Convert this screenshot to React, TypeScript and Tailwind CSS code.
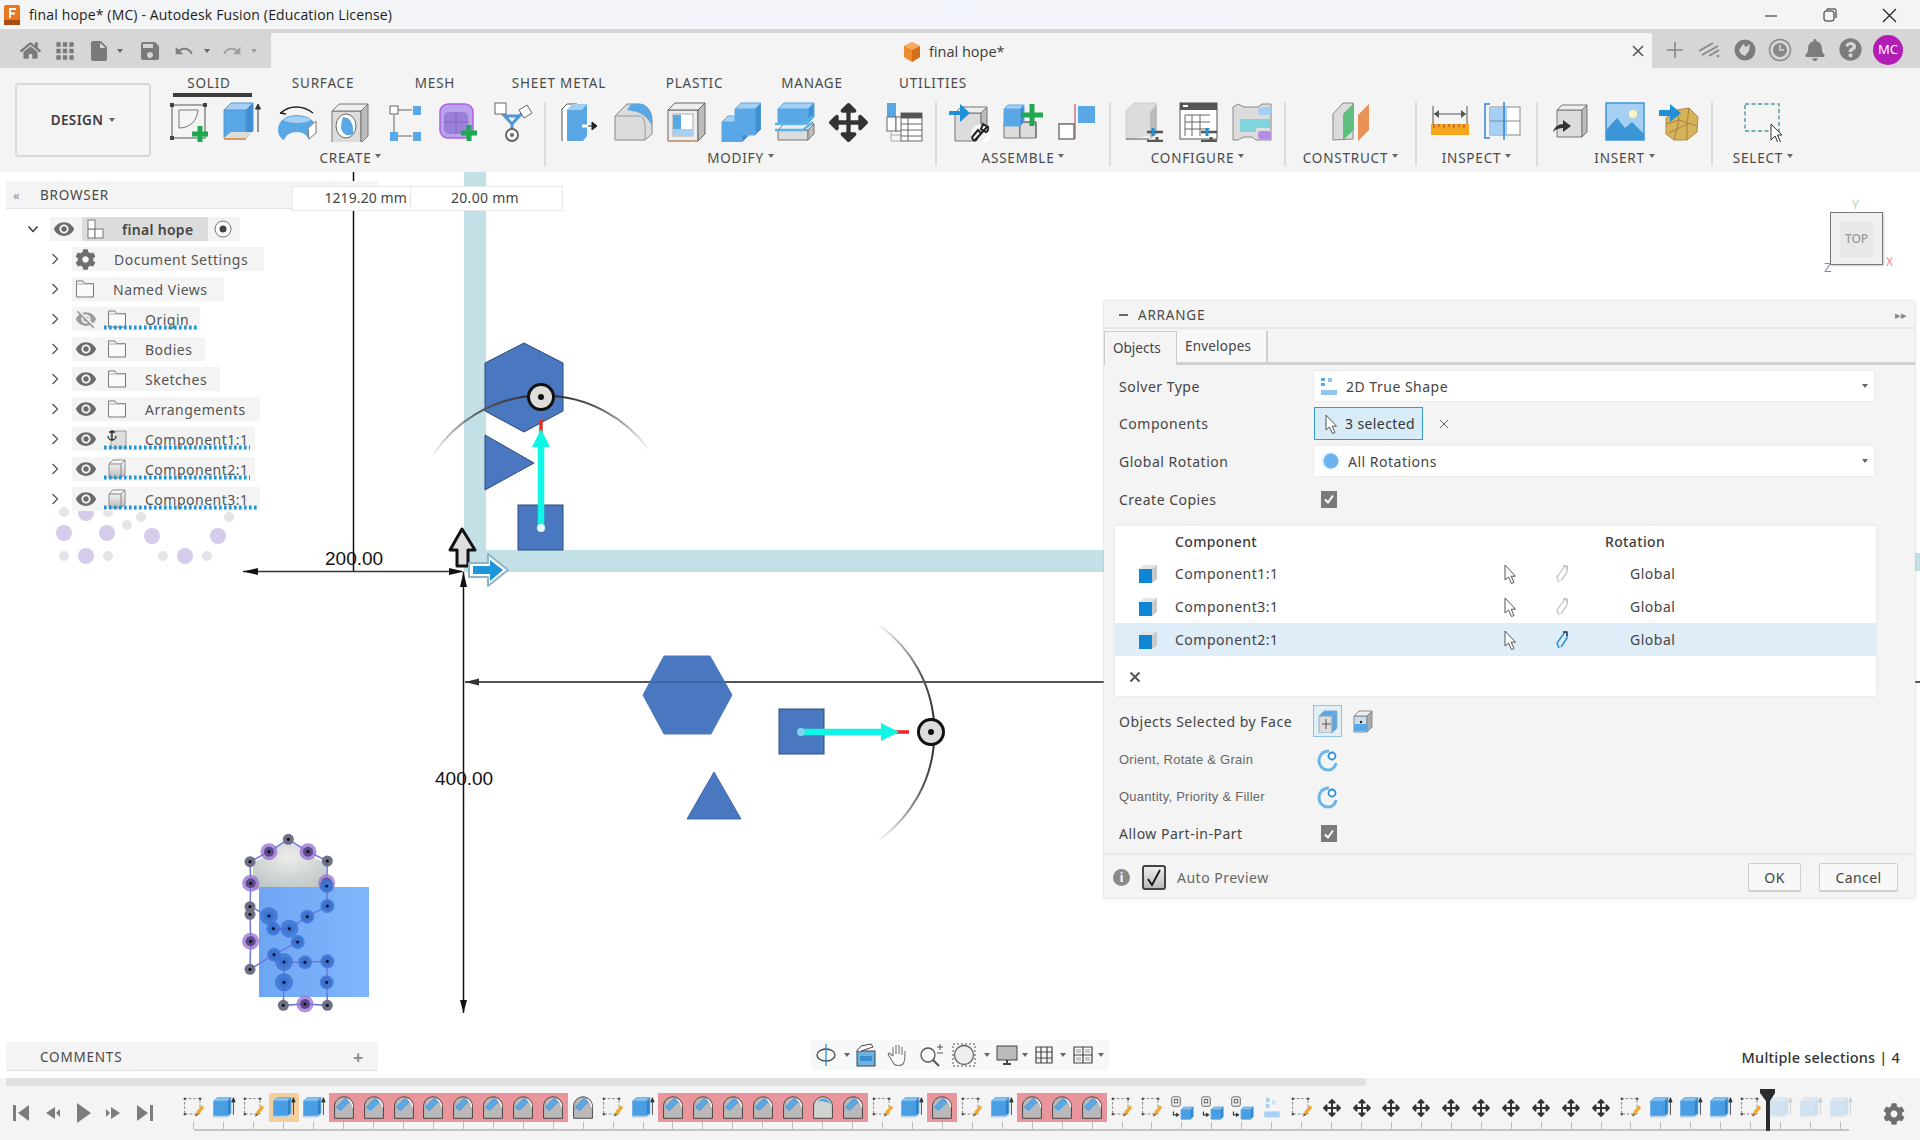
import React from "react";
import { FaArrowsAlt, FaBell, FaCog, FaHome, FaQuestionCircle } from "react-icons/fa";
import { MdApps, MdInsertDriveFile, MdRedo, MdSave, MdUndo, MdVisibility, MdVisibilityOff } from "react-icons/md";

const B = "#5aa7e6";
const BL = "#a6d0f3";
const G = "#dcdcdc";
const GD = "#bcbcbc";
const OL = "#777";

function Box({ x, y, w, h, d, f = G, t = "#eee", s = GD, st = OL }: { x: number; y: number; w: number; h: number; d: number; f?: string; t?: string; s?: string; st?: string }) {
  return (
    <g stroke={st} strokeWidth="1" strokeLinejoin="round">
      <rect x={x} y={y + d} width={w} height={h} fill={f} />
      <polygon points={`${x},${y + d} ${x + d},${y} ${x + w + d},${y} ${x + w},${y + d}`} fill={t} />
      <polygon points={`${x + w},${y + d} ${x + w + d},${y} ${x + w + d},${y + h} ${x + w},${y + d + h}`} fill={s} />
    </g>
  );
}
const Plus = ({ x, y, s = 8 }: { x: number; y: number; s?: number }) => (
  <path d={`M${x} ${y - s}V${y + s}M${x - s} ${y}H${x + s}`} stroke="#1fa84f" strokeWidth="5" fill="none" />
);
const Sv = ({ children, s = 40, v = 40, cls = "" }: { children: React.ReactNode; s?: number; v?: number; cls?: string }) => (
  <svg width={s} height={s} viewBox={`0 0 ${v} ${v}`} className={"shrink-0 " + cls}>{children}</svg>
);
const Sliders = ({ x, y }: { x: number; y: number }) => (
  <g>
    <path d={`M${x} ${y}h16M${x} ${y + 9}h16`} stroke="#555" strokeWidth="2.5" />
    <path d={`M${x + 6} ${y - 4}v8`} stroke="#1e8fd8" strokeWidth="3" />
    <path d={`M${x + 10} ${y + 5}v8`} stroke="#555" strokeWidth="3" />
  </g>
);

const ribbonIcons: Record<string, React.ReactNode> = {
  sketch: (
    <>
      <rect x="3" y="3" width="33" height="33" fill="none" stroke="#555" />
      {[[1, 1], [34, 1], [1, 34]].map(([a, b]) => <rect key={a + "-" + b} x={a} y={b} width="4" height="4" fill="#444" />)}
      <path d="M10 8V26M10 26C22 26 28 18 29 8M10 8H29" fill="none" stroke="#777" />
      <Plus x={31} y={32} />
    </>
  ),
  extrude: (
    <>
      <Box x={1} y={1} w={22} h={28} d={7} f={B} t={BL} s="#3f8ed4" st="#4f97d6" />
      <polygon points="1,36 8,30 30,30 23,36" fill="#ddd" />
      <path d="M1 37h22" stroke="#e29a5a" strokeWidth="2" />
      <path d="M35 30V3M32.5 7L35 2L37.5 7Z" stroke="#333" fill="#333" />
    </>
  ),
  revolve: (
    <>
      <path d="M1 28C1 18 10 13 20 13C30 13 39 18 39 28L32 38C30 33 26 30 20 30C13 30 9 33 7 38C3 36 1 32 1 28Z" fill={B} />
      <path d="M6 18C12 13 28 13 34 18C28 22 12 22 6 18Z" fill={BL} />
      <polygon points="31,26 39,19 39,31 32,37" fill="#fff" stroke="#777" />
      <path d="M4 11C12 3 26 3 36 11M3 11l5-3M3 11l6 1" fill="none" stroke="#222" strokeWidth="1.4" />
    </>
  ),
  hole: (
    <>
      <Box x={1} y={2} w={29} h={32} d={7} />
      <ellipse cx="15" cy="24" rx="10" ry="12" fill="#fff" stroke="#666" />
      <path d="M12 15C20 15 23 24 22 32C17 35 12 33 10 26C10 22 11 18 12 15Z" fill={B} />
    </>
  ),
  pattern: (
    <>
      <path d="M13 8H27M9 13V30M13 34H27" stroke="#666" />
      <rect x="5" y="4" width="8" height="8" fill="#fff" stroke="#666" />
      <rect x="28" y="4" width="8" height="9" fill={B} />
      <rect x="5" y="30" width="8" height="9" fill={B} />
      <rect x="28" y="30" width="8" height="9" fill={B} />
    </>
  ),
  form: (
    <>
      <rect x="1" y="2" width="33" height="34" rx="8" fill="#b9a3ea" stroke="#b260e0" strokeWidth="1.5" />
      <rect x="5" y="10" width="24" height="22" rx="5" fill="#9a80d8" />
      <path d="M5 20H30M17 10V32" stroke="#7f66c4" />
      <Plus x={30} y={31} />
    </>
  ),
  sym: (
    <>
      <path d="M8 10L19 22L30 10M19 22V30M11 14L27 14" fill="none" stroke="#4f97d6" strokeWidth="3" />
      <rect x="2" y="1" width="11" height="11" fill="#fff" stroke="#666" />
      <polygon points="26,8 34,3 39,11 31,16" fill="#fff" stroke="#666" />
      <circle cx="19" cy="33" r="6" fill="#fff" stroke="#666" strokeWidth="2" />
      <circle cx="19" cy="33" r="2" fill="#666" />
    </>
  ),
  press: (
    <>
      <path d="M3 39V7L8 2H18V39" fill="#fff" stroke="#555" />
      <path d="M8 39V8L14 2H28V34L24 39Z" fill={B} />
      <path d="M8 8L14 2H28L23 8Z" fill={BL} />
      <path d="M23 24H38" stroke="#fff" strokeWidth="3" />
      <path d="M29 24H36M33 20L38 24L33 28Z" stroke="#222" fill="#222" />
    </>
  ),
  fillet: (
    <>
      <path d="M2 38V14L14 2H26C34 2 39 10 39 18V32L32 38Z" fill={G} stroke="#888" />
      <path d="M2 14H26C31 14 33 20 32 38" fill="none" stroke="#999" />
      <path d="M18 2H27C34 2 39 10 39 17V24C36 18 31 12 24 10L14 8Z" fill={B} />
    </>
  ),
  shell: (
    <>
      <Box x={1} y={1} w={30} h={31} d={7} st="#666" f="#eee" />
      <rect x="6" y="12" width="20" height="22" fill="#fff" stroke="#aaa" />
      <path d="M6 34V13H14V27H26V34Z" fill={BL} />
      <path d="M6 13H14V27H6Z" fill={B} />
      <path d="M1 39H31" stroke="#e29a5a" />
    </>
  ),
  combine: (
    <>
      <Box x={1} y={14} w={20} h={20} d={6} f={B} t={BL} s="#3f8ed4" st="#5aa7e6" />
      <Box x={14} y={1} w={20} h={26} d={6} f={B} t={BL} s="#3f8ed4" st="#5aa7e6" />
    </>
  ),
  split: (
    <>
      <Box x={3} y={1} w={30} h={14} d={6} f={B} t={BL} s="#3f8ed4" st="#5aa7e6" />
      <Box x={3} y={22} w={30} h={10} d={6} />
      <path d="M0 28H28L38 20M0 22H28L38 14" stroke="#5ab4ec" strokeWidth="2.4" fill="none" />
    </>
  ),
  table: (
    <>
      <rect x="4" y="1" width="9" height="14" fill={B} />
      <rect x="4" y="15" width="9" height="14" fill="#fff" stroke="#666" />
      <rect x="13" y="15" width="9" height="14" fill="#fff" stroke="#666" />
      <path d="M8 29V39H18M8 33H18" stroke="#aaa" fill="none" />
      <rect x="18" y="11" width="21" height="28" fill="#fff" stroke="#666" />
      <path d="M18 16H39M18 22H39M18 28H39M18 34H39M25 16V39" stroke="#666" />
      <rect x="18" y="11" width="21" height="5" fill="#555" />
    </>
  ),
  insertc: (
    <>
      <Box x={6} y={5} w={26} h={28} d={6} />
      <path d="M0 9H11V2L21 11L11 20V13H0Z" fill="#1e8fd8" />
      <circle cx="32" cy="32" r="10" fill="#fff" opacity=".8" />
      <path d="M26 38L38 25M24 34l5-6 3 3-5 7c-2 2-5-2-3-4ZM34 22l5 3c1 2 0 4-2 5l-5-3Z" stroke="#222" strokeWidth="2" fill="none" />
    </>
  ),
  newcomp: (
    <>
      <Box x={1} y={20} w={16} h={16} d={0} />
      <Box x={17} y={20} w={16} h={16} d={0} />
      <Box x={1} y={3} w={16} h={17} d={4} f={B} t={BL} s="#3f8ed4" st="#5aa7e6" />
      <Plus x={29} y={13} s={11} />
    </>
  ),
  joint: (
    <>
      <rect x="21" y="4" width="17" height="17" fill={B} />
      <path d="M18 2V37" stroke="#c0354a" />
      <path d="M1 22H18" stroke="#777" />
      <rect x="2" y="22" width="15" height="15" fill="#fff" stroke="#777" strokeWidth="1.5" />
    </>
  ),
  cfg1: (
    <>
      <path d="M2 38V9L10 1H32V32" fill={G} stroke="#ccc" />
      <path d="M26 10L33 2V32L26 37Z" fill={GD} />
      <path d="M2 37H25" stroke="#555" />
      <Sliders x={23} y={30} />
    </>
  ),
  cfg2: (
    <>
      <rect x="2" y="1" width="37" height="36" fill="#fff" stroke="#555" />
      <rect x="2" y="1" width="37" height="7" fill="#555" />
      <rect x="5" y="3" width="5" height="2" fill="#fff" />
      <path d="M7 13H32M7 20H32M7 27H32M14 13V34M22 13V34M7 13V34" stroke="#666" />
      <Sliders x={23} y={30} />
    </>
  ),
  cfg3: (
    <>
      <path d="M1 5L6 2L12 5H26L30 2H39V38H24L20 35H12L6 38H1Z" fill={G} stroke="#888" />
      <rect x="26" y="5" width="13" height="8" rx="3" fill={BL} />
      <path d="M8 17H38V26H24V30H8Z" fill="#7fd4de" />
      <rect x="26" y="29" width="13" height="8" rx="3" fill="#b58be8" />
    </>
  ),
  construct: (
    <>
      <path d="M2 38V12L12 1H22V37Z" fill={G} stroke="#888" />
      <polygon points="12,12 23,1 23,28 12,38" fill="#5fbf7f" />
      <polygon points="27,13 38,2 38,28 27,39" fill="#e89255" />
    </>
  ),
  measure: (
    <>
      <path d="M3 4V22M37 4V22M4 12H36" stroke="#555" fill="none" />
      <path d="M9 8L4 12L9 16ZM31 8L36 12L31 16Z" fill="#555" />
      <rect x="1" y="22" width="38" height="11" fill="#f5a61c" />
      <path d="M4 22v4M9 22v3M14 22v4M19 22v3M24 22v4M29 22v3M34 22v4" stroke="#945" />
    </>
  ),
  section: (
    <>
      <rect x="6" y="5" width="30" height="28" fill="#fff" stroke="#888" />
      <rect x="6" y="5" width="17" height="28" fill={BL} />
      <path d="M6 19H36" stroke="#888" />
      <path d="M6 2H1V36H6M20 0V38" stroke="#2e86d6" strokeWidth="1.5" fill="none" />
    </>
  ),
  ins1: (
    <>
      <Box x={6} y={3} w={25} h={27} d={5} />
      <path d="M2 30C3 25 8 22 12 22V18L20 24L12 30V26C8 26 5 27 2 30Z" fill="#333" />
    </>
  ),
  ins2: (
    <>
      <rect x="1" y="1" width="38" height="37" fill={BL} />
      <rect x="1" y="1" width="38" height="37" fill="none" stroke="#3c95d6" strokeWidth="1.5" />
      <circle cx="28" cy="12" r="4" fill="#fff4bd" />
      <path d="M1 38V28L12 16L20 26L27 20L39 32V38Z" fill="#3c95d6" />
    </>
  ),
  ins3: (
    <>
      <path d="M7 16L18 8L30 6L39 15L38 30L28 38H15L7 32Z" fill="#d6b25a" stroke="#ad8b3c" />
      <path d="M7 22L20 18L38 24M18 8L20 18L15 38M30 6L28 22L28 38M10 31L28 22" stroke="#a38338" fill="none" />
      <path d="M0 8H11V2L22 11L11 20V14H0Z" fill="#1e8fd8" />
    </>
  ),
  select: (
    <>
      <rect x="2" y="2" width="34" height="27" fill="none" stroke="#4a9a9a" strokeWidth="1.4" strokeDasharray="4 2.5" />
      <path d="M28 22L28 38L32 34L35 41L37.5 40L34.5 33L39 33Z" fill="#fff" stroke="#333" />
    </>
  ),
};

const tabs = [
  ["SOLID", "w-[72px]"],
  ["SURFACE", "w-[156px]"],
  ["MESH", "w-[68px]"],
  ["SHEET METAL", "w-[180px]"],
  ["PLASTIC", "w-[91px]"],
  ["MANAGE", "w-[144px]"],
  ["UTILITIES", "w-[98px]"],
];

const groups = [
  { label: "CREATE", cls: "w-[381px] pr-[8px] border-r-2", icons: ["sketch", "extrude", "revolve", "hole", "pattern", "form", "sym"] },
  { label: "MODIFY", cls: "w-[391px] border-r-2", icons: ["press", "fillet", "shell", "combine", "split", "move", "table"] },
  { label: "ASSEMBLE", cls: "w-[174px] border-r-2", icons: ["insertc", "newcomp", "joint"] },
  { label: "CONFIGURE", cls: "w-[175px] border-r-2", icons: ["cfg1", "cfg2", "cfg3"] },
  { label: "CONSTRUCT", cls: "w-[131px] border-r-2", icons: ["construct"] },
  { label: "INSPECT", cls: "w-[121px] border-r-2", icons: ["measure", "section"] },
  { label: "INSERT", cls: "w-[175px] border-r-2", icons: ["ins1", "ins2", "ins3"] },
  { label: "SELECT", cls: "w-[100px]", icons: ["select"] },
];

const Tri = ({ cls = "" }: { cls?: string }) => (
  <span className={"inline-block w-0 h-0 border-l-[3px] border-r-[3px] border-t-[4px] border-l-transparent border-r-transparent border-t-[#666] " + cls} />
);

function FusionLogo() {
  return (
    <svg width="18" height="22" viewBox="0 0 18 22" className="shrink-0">
      <rect x="1" y="1" width="16" height="20" rx="2" fill="#e8781e" />
      <rect x="1" y="16" width="16" height="5" fill="#a84a12" />
      <path d="M6 4H13V6H8V8.5H12V10.500H8V14H6Z" fill="#fff" />
    </svg>
  );
}

function TitleBar() {
  return (
    <div className="h-[29px] shrink-0 flex items-center bg-gradient-to-r from-[#f4f4f4] via-[#f2f4fb] to-[#f4f4f4] text-[14px] text-[#1c1c1c] [font-family:'Open_Sans',sans-serif]">
      <div className="ml-[3px] mr-[8px]"><FusionLogo /></div>
      <span className="tracking-[0.15px]">final hope* (MC) - Autodesk Fusion (Education License)</span>
      <div className="ml-auto flex items-center">
        <svg width="58" height="20" viewBox="0 0 58 20"><path d="M23 11H35" stroke="#222" /></svg>
        <svg width="58" height="20" viewBox="0 0 58 20"><rect x="24" y="6" width="10" height="10" rx="2" fill="none" stroke="#222" /><path d="M27 5V4H35Q36 4 36 5V13" fill="none" stroke="#222" /></svg>
        <svg width="62" height="20" viewBox="0 0 62 20"><path d="M25 4L38 17M38 4L25 17" stroke="#222" strokeWidth="1.2" /></svg>
      </div>
    </div>
  );
}

function TopStrip() {
  return (
    <div className="h-[39px] shrink-0 flex bg-[#d6d6d6] text-[#6f6f6f]">
      <div className="w-[271px] shrink-0 flex items-center pl-[20px] pt-[4px]">
        <FaHome size={21} className="text-[#7a7a7a]" />
        <MdApps size={26} className="ml-[11px] text-[#7a7a7a]" />
        <MdInsertDriveFile size={24} className="ml-[9px] text-[#7a7a7a]" />
        <Tri cls="ml-[6px]" />
        <MdSave size={24} className="ml-[15px] text-[#7a7a7a]" />
        <MdUndo size={20} className="ml-[12px] text-[#808080]" />
        <Tri cls="ml-[10px]" />
        <MdRedo size={20} className="ml-[12px] text-[#a0a0a0]" />
        <Tri cls="ml-[9px] opacity-50" />
      </div>
      <div className="flex-1 mt-[4px] bg-[#f4f4f4] rounded-t-[3px] flex items-center relative">
        <div className="ml-[632px] mt-[3px] flex items-center gap-[8px] text-[14.5px] text-[#3a3a3a] [font-family:'Open_Sans',sans-serif]">
          <svg width="18" height="22" viewBox="0 0 18 22"><polygon points="9,1 17,5 17,16 9,21 1,16 1,5" fill="#ee8a2f" /><polygon points="9,9 17,5 17,16 9,21" fill="#d36f17" /><polygon points="9,1 17,5 9,9 1,5" fill="#f8ab61" /></svg>
          <span>final hope*</span>
        </div>
        <svg width="14" height="14" viewBox="0 0 14 14" className="absolute right-[7px] top-[11px]"><path d="M2 2L12 12M12 2L2 12" stroke="#555" strokeWidth="1.5" /></svg>
      </div>
      <div className="w-[268px] shrink-0 flex items-center pl-[13px] pt-[2px] text-[#7c7c7c]">
        <svg width="20" height="20" viewBox="0 0 20 20"><path d="M10 2V18M2 10H18" stroke="#888" strokeWidth="1.6" /></svg>
        <svg width="24" height="20" viewBox="0 0 24 20" className="ml-[12px]"><path d="M2 11L16 3M5 15L21 6M12 16L22 10" stroke="#888" strokeWidth="2" /><circle cx="21" cy="16" r="1.300" fill="#888" /></svg>
        <svg width="24" height="24" viewBox="0 0 24 24" className="ml-[12px]"><circle cx="12" cy="12" r="10.500" fill="#7c7c7c" /><path d="M6 12L10 6L13 9L17 6L16 13L12 18L8 16Z" fill="#d6d6d6" /></svg>
        <svg width="24" height="24" viewBox="0 0 24 24" className="ml-[11px]"><circle cx="12" cy="12" r="10.500" fill="none" stroke="#8a8a8a" strokeWidth="1.500" /><circle cx="12" cy="12" r="7" fill="#8a8a8a" /><path d="M12 7V12H16" stroke="#d6d6d6" strokeWidth="1.500" fill="none" /></svg>
        <FaBell size={22} className="ml-[12px]" />
        <FaQuestionCircle size={23} className="ml-[13px]" />
        <div className="ml-[11px] w-[30px] h-[30px] rounded-full bg-[#b31cb5] text-white text-[13px] flex items-center justify-center">MC</div>
      </div>
    </div>
  );
}

function Ribbon() {
  return (
    <div className="h-[104px] shrink-0 bg-[#f4f4f4] flex items-start text-[#444]">
      <div className="ml-[15px] mr-[14px] mt-[15px] w-[136px] h-[74px] shrink-0 border-2 border-[#d8d8d8] rounded-[4px] flex items-center justify-center gap-[6px] text-[13.5px] font-semibold tracking-[0.4px] text-[#3c3c3c]">
        DESIGN <Tri />
      </div>
      <div className="flex flex-col">
        <div className="h-[34px] flex items-start ml-[8px] relative text-[13.5px] tracking-[0.8px] text-[#4a4a4a]">
          {tabs.map(([t, w]) => <div key={t} className={w + " text-center pt-[5px] whitespace-nowrap"}>{t}</div>)}
          <div className="absolute left-0 top-[25px] w-[79px] h-[4px] bg-[#3d3d3d]" />
        </div>
        <div className="flex">
          {groups.map((g) => (
            <div key={g.label} className={"h-[64px] border-[#dcdcdc] flex flex-col items-center shrink-0 " + g.cls}>
              <div className="h-[42px] flex justify-center">
                {g.icons.map((ic) => (
                  <div key={ic} className="w-[54px] flex items-center justify-center">
                    {ic === "move" ? <FaArrowsAlt size={39} className="text-[#333]" /> : <Sv>{ribbonIcons[ic]}</Sv>}
                  </div>
                ))}
              </div>
              <div className="mt-[8px] flex items-center gap-[4px] text-[13.5px] tracking-[0.8px] text-[#4a4a4a] leading-[16px]">
                {g.label}
                <Tri cls="mb-[4px]" />
              </div>
            </div>
          ))}
        </div>
      </div>
    </div>
  );
}

const Folder = () => (
  <svg width="20" height="20" viewBox="0 0 20 20" className="shrink-0 block"><path d="M1.500 18V2H8L9.500 4.500H18.500V18Z" fill="#fafafa" stroke="#777" /><path d="M1.500 5H18.500" stroke="#aaa" /></svg>
);
const Comp3D = () => (
  <svg width="20" height="22" viewBox="0 0 20 22" className="shrink-0 block"><defs><linearGradient id="cg" x1="0" y1="0" x2="0" y2="1"><stop offset="0" stopColor="#fff" /><stop offset="1" stopColor="#bbb" /></linearGradient></defs><path d="M2 20V6L6 2H18V16L14 20Z" fill="url(#cg)" stroke="#888" /><path d="M2 6H14V20M14 6L18 2" fill="none" stroke="#888" /></svg>
);
const CompAnchor = () => (
  <svg width="20" height="22" viewBox="0 0 20 22" className="shrink-0 block"><rect x="4" y="3" width="15" height="17" fill="#ddd" stroke="#999" /><path d="M5 2V12M2 4H8M1 8C1 12 5 12 5 12C5 12 9 12 9 8" stroke="#222" strokeWidth="1.300" fill="none" /></svg>
);
const Chevron = ({ open = false }: { open?: boolean }) => (
  <svg width="12" height="12" viewBox="0 0 12 12" className="shrink-0">{open ? <path d="M1.500 3.500L6 8.500L10.500 3.500" fill="none" stroke="#333" strokeWidth="1.400" /> : <path d="M3.500 1L8.500 6L3.500 11" fill="none" stroke="#555" strokeWidth="1.300" />}</svg>
);
const Eye = ({ off = false }: { off?: boolean }) =>
  off ? <MdVisibilityOff size={22} className="text-[#9c9c9c] shrink-0" /> : <MdVisibility size={22} className="text-[#6b6b6b] shrink-0" />;

const Wave = ({ w }: { w: number }) => (
  <svg width={w} height="5" viewBox={`0 0 ${w} 5`} className="absolute left-[32px] top-[18px] pointer-events-none"><line x1="0" y1="2.500" x2={w} y2="2.500" stroke="#1f95d6" strokeWidth="4" strokeDasharray="2.600 2.400" /></svg>
);

function TreeRow({ children, w, wave }: { children: React.ReactNode; w: string; wave?: number }) {
  return (
    <div className="flex items-center h-[24px]">
      <div className="w-[18px] ml-[46px] mr-[8px] flex justify-center"><Chevron /></div>
      <div className={"relative h-[24px] bg-[#f4f4f4] flex items-center pl-[3px] shrink-0 " + w}>
        {children}
        {wave ? <Wave w={wave} /> : null}
      </div>
    </div>
  );
}

function Browser() {
  const rows: { t: string; w: string; wave?: number; eye?: "on" | "off"; icon: React.ReactNode }[] = [
    { t: "Document Settings", w: "w-[192px]", icon: <span className="flex mr-[18px]"><FaCog size={21} className="text-[#6f6f6f] shrink-0" /></span> },
    { t: "Named Views", w: "w-[152px]", icon: <span className="flex mr-[18px]"><Folder /></span> },
    { t: "Origin", w: "w-[128px]", eye: "off", wave: 94, icon: <Folder /> },
    { t: "Bodies", w: "w-[133px]", eye: "on", icon: <Folder /> },
    { t: "Sketches", w: "w-[148px]", eye: "on", icon: <Folder /> },
    { t: "Arrangements", w: "w-[188px]", eye: "on", icon: <Folder /> },
    { t: "Component1:1", w: "w-[183px]", eye: "on", wave: 146, icon: <CompAnchor /> },
    { t: "Component2:1", w: "w-[183px]", eye: "on", wave: 146, icon: <Comp3D /> },
    { t: "Component3:1", w: "w-[188px]", eye: "on", wave: 154, icon: <Comp3D /> },
  ];
  return (
    <div className="absolute left-[6px] top-[9px] w-[372px] text-[14px] text-[#555]">
      <div className="h-[28px] bg-[#f4f4f4] border-b border-[#e2e2e2] flex items-center pl-[7px] pt-[2px]">
        <span className="text-[#888] text-[13px] w-[27px]">«</span>
        <span className="text-[13.5px] tracking-[0.8px] text-[#4a4a4a]">BROWSER</span>
      </div>
      <div className="mt-[8px] flex flex-col gap-[6px] -ml-[6px]">
        <div className="flex items-center h-[24px]">
          <div className="w-[12px] ml-[27px] mr-[11px] flex justify-center"><Chevron open /></div>
          <div className="h-[24px] bg-[#f4f4f4] flex items-center pl-[3px] w-[190px]">
            <Eye />
            <div className="ml-[7px] h-[24px] w-[126px] bg-[#dcdcdc] flex items-center pl-[4px]">
              <svg width="20" height="20" viewBox="0 0 20 20" className="shrink-0"><rect x="2" y="10" width="7" height="9" fill="#fff" stroke="#777" /><rect x="9" y="10" width="8" height="9" fill="#fff" stroke="#777" /><rect x="2" y="1" width="7" height="9" fill="#fff" stroke="#777" /></svg>
              <span className="ml-[16px] font-semibold text-[#444] tracking-[0.3px]">final hope</span>
            </div>
            <svg width="20" height="20" viewBox="0 0 20 20" className="ml-[5px]"><circle cx="10" cy="10" r="8" fill="#fff" stroke="#777" /><ellipse cx="10" cy="10" rx="3.500" ry="3.500" fill="#444" /></svg>
          </div>
        </div>
        {rows.map((r) => (
          <TreeRow key={r.t} w={r.w} wave={r.wave}>
            {r.eye ? <Eye off={r.eye === "off"} /> : null}
            <span className={r.eye ? "ml-[10px] mr-[18px] shrink-0 flex" : "shrink-0 flex"}>{r.icon}</span>
            <span className="tracking-[0.5px] whitespace-nowrap">{r.t}</span>
          </TreeRow>
        ))}
      </div>
    </div>
  );
}

const Hex1 = "524,343 563,363 563,411 524,432 485,411 485,363";
const Hex2 = "643,695 664,656 710,656 732,695 711,734 664,734";
const bigN = [[207,155],[324,155],[152,250],[380,248],[152,424],[315,612]];
const smallN = [[265,118],[150,185],[382,183],[150,320],[150,343],[150,508],[250,616],[382,616]];
const blueN = [[382,318],[207,348],[322,350],[220,386],[268,386],[293,426],[222,464],[252,486],[315,487],[382,484],[252,547],[380,547],[380,258]];
const pts = (a: number[][]) => a.map(([x, y]) => [200 + x / 3, 800 + y / 3]);
const poly = (a: number[][]) => pts(a).map(([x, y]) => x + "," + y).join(" ");
const clusterLines = [
  [[150,185],[207,155],[265,118],[324,155],[382,183],[380,258],[382,318],[322,350],[268,386],[220,386],[207,348],[150,320]],
  [[150,185],[152,250],[150,343],[152,424],[150,508],[222,464],[293,426]],
  [[222,464],[252,486],[315,487],[382,484],[380,547],[382,616],[315,612],[250,616],[252,547],[252,486]],
];
const ghostBig = [[86,513],[64,533],[107,533],[152,536],[218,536],[86,556],[185,556]];
const ghostSmall = [[64,512],[108,512],[141,517],[127,525],[229,517],[64,556],[108,556],[163,556],[207,556]];

function Canvas() {
  return (
    <svg width="1920" height="906" viewBox="0 172 1920 906" className="absolute inset-0">
      <defs>
        <linearGradient id="arc1" x1="430" x2="650" y1="0" y2="0" gradientUnits="userSpaceOnUse">
          <stop offset="0" stopColor="#333" stopOpacity="0" /><stop offset=".25" stopColor="#555" /><stop offset=".5" stopColor="#222" /><stop offset=".75" stopColor="#555" /><stop offset="1" stopColor="#333" stopOpacity="0" />
        </linearGradient>
        <linearGradient id="arc2" x1="0" x2="0" y1="622" y2="842" gradientUnits="userSpaceOnUse">
          <stop offset="0" stopColor="#333" stopOpacity="0" /><stop offset=".25" stopColor="#555" /><stop offset=".5" stopColor="#222" /><stop offset=".75" stopColor="#555" /><stop offset="1" stopColor="#333" stopOpacity="0" />
        </linearGradient>
        <linearGradient id="rectg" x1="0" x2="1" y1="0" y2="0"><stop offset="0" stopColor="#6ea6f4" /><stop offset=".5" stopColor="#78aef8" /><stop offset="1" stopColor="#7fb6fb" /></linearGradient>
        <radialGradient id="dome" cx=".5" cy=".3" r=".8"><stop offset="0" stopColor="#ecedeb" /><stop offset="1" stopColor="#b9c2c2" /></radialGradient>
      </defs>
      <rect x="464" y="172" width="22" height="400" fill="#c2e0e6" />
      <rect x="464" y="550" width="645" height="22" fill="#c2e0e6" />
      <rect x="1915" y="553" width="5" height="18" fill="#c2e0e6" />
      <path d="M353.500 172V572" stroke="#111" strokeWidth="1.500" />
      <path d="M243 571.500H462" stroke="#333" strokeWidth="1.500" />
      <polygon points="243,571.500 258,568 258,575" fill="#111" />
      <polygon points="464,571.500 449,568 449,575" fill="#111" />
      <path d="M463.500 572V1013" stroke="#111" strokeWidth="1.500" />
      <polygon points="463.500,572 460,587 467,587" fill="#111" />
      <polygon points="463.500,1013 460,1000 467,1000" fill="#111" />
      <path d="M465 682H1104" stroke="#555" strokeWidth="2" />
      <polygon points="465,682 479,678.500 479,685.500" fill="#333" />
      <path d="M1915 682H1920" stroke="#555" strokeWidth="2" />

      <polygon points={Hex1} fill="#4a78c0" stroke="#2e4a78" />
      <polygon points="485,435 534,463 485,490" fill="#4a78c0" stroke="#2e4a78" />
      <rect x="518" y="505" width="45" height="45" fill="#4a78c0" stroke="#2e4a78" />
      <path d="M433 455A131 131 0 0 1 649 450" fill="none" stroke="url(#arc1)" strokeWidth="2" />
      <path d="M541 420V445" stroke="#d32" strokeWidth="3.500" />
      <path d="M541 528V446" stroke="#0ff5e6" strokeWidth="6.500" />
      <polygon points="541,429 532,447 550,447" fill="#0ff5e6" />
      <circle cx="541" cy="528" r="4" fill="#e8f8ff" />
      <circle cx="541" cy="397" r="12.500" fill="#dededa" stroke="#111" strokeWidth="3" />
      <circle cx="541" cy="397" r="3" fill="#111" />

      <polygon points={Hex2} fill="#4a78c0" stroke="#4a78c0" />
      <path d="M650 682H724" stroke="#3b5f9c" strokeWidth="1.500" />
      <rect x="779" y="709" width="45" height="45" fill="#4a78c0" stroke="#2e4a78" />
      <polygon points="714,772 687,819 741,819" fill="#4a78c0" stroke="#3f68a8" />
      <path d="M879 625A132 132 0 0 1 879 840" fill="none" stroke="url(#arc2)" strokeWidth="2" />
      <path d="M895 732H909" stroke="#e22" strokeWidth="3.500" />
      <path d="M800 732H885" stroke="#0ff5e6" strokeWidth="6.500" />
      <polygon points="899,732 881,723 881,741" fill="#0ff5e6" />
      <circle cx="801" cy="732" r="4" fill="#7fd4ee" />
      <circle cx="931" cy="732" r="12.500" fill="#dcdcdc" stroke="#111" strokeWidth="3" />
      <circle cx="931" cy="732" r="3" fill="#111" />

      <polygon points="462,529 450,550 457,550 457,566 468,566 468,550 475,550" fill="#dedede" stroke="#111" strokeWidth="3" strokeLinejoin="round" />
      <polygon points="469,563 488,563 488,554 508,570 488,586 488,577 469,577" fill="#fff" stroke="#8fb4c6" strokeWidth="2" strokeLinejoin="round" />
      <polygon points="473,566 490,566 490,560 503,570 490,581 490,574 473,574" fill="#1e95d8" />

      <g opacity=".55">
        {ghostBig.map(([x, y]) => <circle key={x + "-" + y} cx={x} cy={y} r="8" fill="#b3a2db" />)}
        {ghostSmall.map(([x, y]) => <circle key={x + "-" + y} cx={x} cy={y} r="5" fill="#cfcfd4" />)}
      </g>

      <path d="M253 890V862Q262 860 270 852Q280 843 288 843Q296 843 305 852Q315 860 326 862V890Z" fill="url(#dome)" />
      <rect x="259" y="887" width="110" height="110" fill="url(#rectg)" />
      {clusterLines.map((l, i) => <polyline key={i} points={poly(l)} fill="none" stroke="#6a78dc" strokeWidth="1.500" />)}
      {pts(bigN).map(([x, y]) => (
        <g key={x + "-" + y}><circle cx={x} cy={y} r="8.500" fill="#9a6ed0" opacity=".75" /><circle cx={x} cy={y} r="5" fill="#5a4a8c" /><circle cx={x} cy={y} r="1.600" fill="#111" /></g>
      ))}
      {pts(smallN).map(([x, y]) => (
        <g key={x + "-" + y}><circle cx={x} cy={y} r="5.500" fill="#6f6f88" /><circle cx={x} cy={y} r="1.600" fill="#111" /></g>
      ))}
      {pts(blueN).map(([x, y], i) => (
        <g key={x + "-" + y}><circle cx={x} cy={y} r={i % 3 === 1 ? 9 : 7} fill="#3d72d2" opacity=".8" /><circle cx={x} cy={y} r="5" fill="#3a74d0" /><circle cx={x} cy={y} r="1.600" fill="#113" /></g>
      ))}
    </svg>
  );
}

const Cursor = ({ s = 20 }: { s?: number }) => (
  <svg width={s} height={s} viewBox="0 0 20 20" className="shrink-0"><path d="M5 1V16L8.500 13L11.500 19.500L14 18.500L11.200 12.200H15.500Z" fill="#fff" stroke="#555" /></svg>
);
const RotIcon = ({ on = false }: { on?: boolean }) => (
  <svg width="16" height="20" viewBox="0 0 16 20" className="shrink-0"><path d="M11 2L3 13L5 18M13 3L13 8L7 17" fill="none" stroke={on ? "#2a8fd4" : "#ccc"} strokeWidth="1.500" /><path d="M9 2H13V6" fill="none" stroke={on ? "#333" : "#bbb"} strokeWidth="1.300" /></svg>
);
const TCube = () => (
  <svg width="20" height="20" viewBox="0 0 20 20" className="shrink-0"><rect x="1" y="5" width="13" height="14" fill="#0f85d6" /><polygon points="1,5 6,1 19,1 14,5" fill="#e4e4e4" /><polygon points="14,5 19,1 19,15 14,19" fill="#c8c8c8" /></svg>
);
const Check = ({ cls = "" }: { cls?: string }) => (
  <div className={"w-[16px] h-[17px] bg-[#7b7b7b] flex items-center justify-center shrink-0 " + cls}>
    <svg width="12" height="12" viewBox="0 0 12 12"><path d="M2 6.500L5 9.500L10 2.500" fill="none" stroke="#fff" strokeWidth="2" /></svg>
  </div>
);
const Spin = () => (
  <svg width="22" height="24" viewBox="0 0 22 24" className="shrink-0"><path d="M12 3C5 3 2 8 2 13C2 18 6 22 11 22C15 22 18 20 19 15" fill="none" stroke="#6cb6e6" strokeWidth="3" /><circle cx="15" cy="8" r="3.500" fill="#fff" stroke="#2a8fd4" strokeWidth="1.800" /></svg>
);

function Label({ children, dim = false }: { children: React.ReactNode; dim?: boolean }) {
  return dim ? (
    <div className="w-[195px] shrink-0 text-[13px] text-[#666] [font-family:'Liberation_Sans',sans-serif] tracking-[0.25px]">{children}</div>
  ) : (
    <div className="w-[195px] shrink-0 text-[#444] tracking-[0.5px]">{children}</div>
  );
}

function SelectBox({ icon, text }: { icon: React.ReactNode; text: string }) {
  return (
    <div className="w-[560px] h-[30px] bg-white flex items-center pl-[6px] pr-[6px] shadow-[0_0_2px_#ddd]">
      {icon}
      <span className="ml-[8px] tracking-[0.5px] text-[#444]">{text}</span>
      <Tri cls="ml-auto" />
    </div>
  );
}

function CompRow({ name, on = false }: { name: string; on?: boolean }) {
  return (
    <div className={"h-[33px] flex items-center pl-[23px] text-[#444] " + (on ? "bg-[#deedf8]" : "")}>
      <TCube />
      <span className="ml-[17px] w-[325px] tracking-[0.5px] shrink-0">{name}</span>
      <Cursor />
      <span className="ml-[34px]"><RotIcon on={on} /></span>
      <span className="ml-[60px] tracking-[0.5px]">Global</span>
    </div>
  );
}

function Arrange() {
  return (
    <div className="absolute left-[1104px] top-[129px] w-[811px] h-[597px] bg-[#f4f4f4] text-[14px] shadow-[0_0_2px_#bbb] flex flex-col">
      <div className="h-[28px] shrink-0 flex items-center border-b-2 border-[#e6e6e6] text-[#4a4a4a] pl-[15px] pr-[8px] pt-[2px]">
        <span className="w-[9px] h-[2px] bg-[#666]" />
        <span className="ml-[10px] text-[13.5px] tracking-[0.8px]">ARRANGE</span>
        <span className="ml-auto text-[11px] text-[#888]">▸▸</span>
      </div>
      <div className="h-[35px] shrink-0 flex items-end text-[13.5px] text-[#444] mt-[1px]">
        <div className="w-[73px] h-[34px] border border-b-0 border-[#ccc] flex items-center pl-[8px]">Objects</div>
        <div className="w-[91px] h-[34px] border-r-2 border-b-[3px] border-[#d0d0d0] bg-[#f8f8f8] flex items-center pl-[8px] tracking-[0.2px]">Envelopes</div>
        <div className="flex-1 border-b-[3px] border-[#d0d0d0]" />
      </div>
      <div className="pl-[15px] mt-[6px] flex flex-col">
        <div className="h-[30px] flex items-center"><Label>Solver Type</Label>
          <SelectBox text="2D True Shape" icon={<svg width="18" height="20" viewBox="0 0 18 20"><rect x="1" y="2" width="4" height="3" fill="#5aa7e6" /><rect x="1" y="7" width="4" height="3" fill="#5aa7e6" /><rect x="8" y="2" width="4" height="4" fill="#8fc5ee" /><rect x="1" y="14" width="16" height="5" fill="#8fc5ee" /></svg>} />
        </div>
        <div className="h-[33px] mt-[6px] flex items-center"><Label>Components</Label>
          <div className="w-[109px] h-[33px] bg-[#d8ecf7] border border-[#3a9ad0] flex items-center pl-[6px] gap-[4px] text-[#333] tracking-[0.4px] whitespace-nowrap"><Cursor s={20} />3 selected</div>
          <svg width="12" height="12" viewBox="0 0 12 12" className="ml-[15px]"><path d="M2 2L10 10M10 2L2 10" stroke="#666" /></svg>
        </div>
        <div className="h-[30px] mt-[6px] flex items-center"><Label>Global Rotation</Label>
          <SelectBox text="All Rotations" icon={<svg width="20" height="20" viewBox="0 0 20 20"><circle cx="10" cy="10" r="9" fill="#e8f2fa" /><circle cx="11" cy="10" r="7.500" fill="#6cb4f0" /></svg>} />
        </div>
        <div className="h-[30px] mt-[8px] flex items-center"><Label>Create Copies</Label><Check cls="ml-[7px]" /></div>
      </div>
      <div className="ml-[11px] mt-[12px] w-[761px] h-[170px] shrink-0 bg-white shadow-[0_0_2px_#ddd] flex flex-col">
        <div className="h-[30px] flex items-center shrink-0 text-[#3c3c3c] font-medium tracking-[0.35px]">
          <span className="ml-[60px] w-[430px]">Component</span><span>Rotation</span>
        </div>
        <div className="mt-[1px]"><CompRow name="Component1:1" /></div>
        <CompRow name="Component3:1" />
        <CompRow name="Component2:1" on />
        <svg width="12" height="12" viewBox="0 0 12 12" className="ml-[14px] mt-[15px]"><path d="M1.500 1.500L10.500 10.500M10.500 1.500L1.500 10.500" stroke="#555" strokeWidth="2" /></svg>
      </div>
      <div className="pl-[15px] mt-[9px] flex flex-col">
        <div className="h-[32px] flex items-center"><Label>Objects Selected by Face</Label>
          <div className="-ml-[1px] w-[29px] h-[32px] bg-[#e1eff9] border border-[#8cc4e8] flex items-center justify-center">
            <svg width="22" height="24" viewBox="0 0 22 24"><Box x={2} y={2} w={13} h={17} d={5} f="#ddd" t="#5aa7e6" s="#5aa7e6" st="#9ab" /><path d="M9 10V20M5 15H14" stroke="#555" /></svg>
          </div>
          <svg width="22" height="24" viewBox="0 0 22 24" className="ml-[10px]"><Box x={2} y={2} w={13} h={16} d={5} f="#c9e0f2" t="#eee" s="#aaa" st="#888" /><rect x="2" y="15" width="13" height="7" fill="#5aa7e6" /><circle cx="9" cy="13" r="1.200" fill="#222" /></svg>
        </div>
        <div className="h-[37px] mt-[4px] flex items-center"><Label dim>Orient, Rotate &amp; Grain</Label><span className="ml-[3px]"><Spin /></span></div>
        <div className="h-[37px] flex items-center"><Label dim>Quantity, Priority &amp; Filler</Label><span className="ml-[3px]"><Spin /></span></div>
        <div className="h-[37px] flex items-center"><Label>Allow Part-in-Part</Label><Check cls="ml-[7px]" /></div>
      </div>
      <div className="mt-auto h-[45px] shrink-0 border-t-2 border-[#e8e8e8] flex items-center pl-[9px] pr-[17px] pt-[2px]">
        <div className="w-[17px] h-[17px] rounded-full bg-[#8a8a8a] text-white text-[12px] font-bold flex items-center justify-center">i</div>
        <div className="ml-[12px] w-[24px] h-[25px] rounded-[3px] border-2 border-[#444] bg-gradient-to-b from-[#eee] to-[#bbb] flex items-center justify-center">
          <svg width="18" height="20" viewBox="0 0 18 20"><path d="M3 11L7 17L15 2" fill="none" stroke="#111" strokeWidth="1.800" /></svg>
        </div>
        <span className="ml-[11px] text-[#666] tracking-[0.5px]">Auto Preview</span>
        <div className="ml-auto w-[53px] h-[29px] bg-[#f8f8f8] border border-[#cfcfcf] border-b-2 rounded-[2px] flex items-center justify-center text-[#444] tracking-[0.4px]">OK</div>
        <div className="ml-[18px] w-[79px] h-[29px] bg-[#f8f8f8] border border-[#cfcfcf] border-b-2 rounded-[2px] flex items-center justify-center text-[#444] tracking-[0.4px]">Cancel</div>
      </div>
    </div>
  );
}

function ViewCube() {
  return (
    <div className="absolute left-[1822px] top-[24px] w-[76px] h-[76px]">
      <div className="absolute left-[8px] top-[16px] w-[53px] h-[53px] bg-[#f0f0f0] border border-[#777] flex items-center justify-center shadow-[1px_1px_2px_#ccc]">
        <div className="w-[33px] h-[36px] bg-[#e8e8e8] flex items-center justify-center text-[12px] text-[#999] font-medium">TOP</div>
      </div>
      <span className="absolute left-[30px] top-[0px] text-[12px] text-[#a8dca8]">Y</span>
      <span className="absolute left-[64px] top-[57px] text-[12px] text-[#ee8a8a]">X</span>
      <span className="absolute left-[2px] top-[62px] text-[13px] text-[#8a80dc]">Z</span>
    </div>
  );
}

function NavBar() {
  return (
    <div className="absolute left-[811px] top-[868px] w-[298px] h-[30px] bg-[#f6f8fa] flex items-center pl-[4px] text-[#666]">
      <svg width="22" height="26" viewBox="0 0 22 26"><ellipse cx="11" cy="13" rx="9" ry="6" fill="none" stroke="#444" strokeWidth="1.300" /><path d="M11 2V24" stroke="#2a8fd4" strokeWidth="1.300" /></svg>
      <Tri cls="ml-[7px]" />
      <svg width="22" height="24" viewBox="0 0 22 24" className="ml-[5px]"><rect x="2" y="8" width="18" height="15" fill="#6cb2e4" stroke="#444" /><path d="M2 8L6 3L16 1L18 4L6 8" fill="#fff" stroke="#444" /><rect x="5" y="13" width="12" height="5" fill="#3b8fce" /></svg>
      <svg width="24" height="26" viewBox="0 0 24 26" className="ml-[9px]"><path d="M7 14V5M10 12V3M13 12V3M16 13V5M7 14L3 11C2 12 2 13 3 14L8 22C10 24 15 24 17 22C19 20 19 16 19 9" fill="none" stroke="#777" strokeWidth="1.100" /></svg>
      <svg width="26" height="26" viewBox="0 0 26 26" className="ml-[8px]"><circle cx="10" cy="13" r="7" fill="none" stroke="#555" strokeWidth="1.300" /><path d="M15 18L21 24" stroke="#555" strokeWidth="2" /><path d="M19 5H25M22 2V8M19 11H25" stroke="#555" /></svg>
      <svg width="24" height="24" viewBox="0 0 24 24" className="ml-[8px]"><rect x="1" y="1" width="22" height="22" fill="none" stroke="#555" strokeDasharray="2 2" /><circle cx="12" cy="12" r="9.500" fill="#eee" stroke="#666" strokeWidth="1.300" /></svg>
      <Tri cls="ml-[8px]" />
      <svg width="24" height="24" viewBox="0 0 24 24" className="ml-[5px]"><rect x="2" y="3" width="20" height="14" fill="#bbb" stroke="#444" /><path d="M8 21H16M12 17V21" stroke="#444" strokeWidth="2" /></svg>
      <Tri cls="ml-[3px]" />
      <svg width="20" height="20" viewBox="0 0 20 20" className="ml-[6px]"><path d="M2 2H18V18H2ZM7 2V18M13 2V18M2 7H18M2 13H18" fill="none" stroke="#444" strokeWidth="1.200" /></svg>
      <Tri cls="ml-[6px]" />
      <svg width="22" height="20" viewBox="0 0 22 20" className="ml-[6px]"><path d="M2 2H20V18H2ZM11 2V18M2 10H20" fill="none" stroke="#444" strokeWidth="1.200" /><path d="M4 5H9M4 7H9M13 5H18M13 7H18M4 13H9M4 15H9M13 13H18M13 15H18" stroke="#999" /></svg>
      <Tri cls="ml-[4px]" />
    </div>
  );
}

const tIcons: Record<string, React.ReactNode> = {
  s: (
    <>
      <rect x="3" y="3" width="18" height="18" fill="none" stroke="#777" strokeDasharray="3 2" />
      {[[2, 2], [20, 2], [2, 20]].map(([a, b]) => <rect key={a + "_" + b} x={a} y={b} width="2.500" height="2.500" fill="#444" />)}
      <path d="M15 24L17 18L23 11L26 13L20 21Z" fill="#f0a92c" />
      <path d="M15 24L17 21L19 22Z" fill="#333" />
    </>
  ),
  e: (
    <>
      <Box x={2} y={2} w={16} h={18} d={4} f="#4a9fe4" t="#8ec6f0" s="#2f82c8" st="#4a9fe4" />
      <path d="M2 24H18L22 22" stroke="#b8d4ea" strokeWidth="2" fill="none" />
      <path d="M25 22V3M23 7L25 2L27 7Z" stroke="#333" fill="#333" />
    </>
  ),
  f: (
    <>
      <path d="M3 26V12C3 5 9 1 14 1C20 1 25 6 25 12V26Z" fill="#b9b9b9" stroke="#333" />
      <path d="M5 13L15 3L20 7L10 17Z" fill="#5aa7e6" stroke="#2e86cf" strokeWidth=".6" />
      <path d="M19 4C22 6 24 9 24 13" stroke="#fff" strokeWidth="1.400" fill="none" />
    </>
  ),
  l: (
    <>
      <path d="M3 26V12C3 5 9 1 14 1C20 1 25 6 25 12V26Z" fill="#d0d4d0" stroke="#333" />
      <path d="M8 6C12 1 20 2 23 9C16 6 12 6 8 6Z" fill="#5aa7e6" />
    </>
  ),
  j: (
    <>
      <rect x="2" y="1" width="10" height="11" rx="2" fill="#eee" stroke="#555" />
      <rect x="5" y="4" width="4" height="4" fill="none" stroke="#555" />
      <path d="M4 18V22H9M7 20L10 22L7 24" stroke="#333" strokeWidth="1.300" fill="none" />
      <Box x={13} y={13} w={11} h={11} d={3} f="#4a9fe4" t="#8ec6f0" s="#2f82c8" st="#4a9fe4" />
    </>
  ),
  a: (
    <>
      <rect x="7" y="2" width="4" height="5" fill="#a6d0f3" />
      <rect x="7" y="9" width="4" height="5" fill="#a6d0f3" />
      <rect x="14" y="5" width="4" height="5" fill="#c8e2f7" />
      <rect x="5" y="18" width="18" height="7" fill="#a6d0f3" />
    </>
  ),
};

const tl: string[] = [
  "s","e","s","eo","e",
  "r","r","r","r","r","r","r","r","f","s","e",
  "r","r","r","r","r","rl","r","s","e","r","s","e","r","r","r","s","s",
  "j","j","j","a","s",
  "m","m","m","m","m","m","m","m","m","m",
  "s","e","e","e","s","x","x","x",
];

function Timeline() {
  return (
    <div className="h-[62px] shrink-0 bg-[#f4f4f4] relative">
      <div className="ml-[6px] w-[1360px] h-[8px] bg-[#e0e0e0] rounded-r-[3px]" />
      <div className="flex items-start mt-[7px]">
        <div className="w-[179px] shrink-0 flex items-center pl-[5px] h-[29px] mt-[5px] text-[#7a7a7a]">
          {[
            <path key="a" d="M6 3V19H3V3ZM19 3V19L8 11Z" />,
            <path key="b" d="M14 5V17L5 11ZM19 7V15L15 11Z" />,
            <path key="c" d="M5 1V21L19 11Z" />,
            <path key="d" d="M8 5V17L17 11ZM3 7V15L7 11Z" />,
            <path key="e" d="M3 3V19L14 11ZM16 3H19V19H16Z" />,
          ].map((p, i) => (
            <div key={i} className="w-[31px] flex justify-center"><svg width="22" height="22" viewBox="0 0 22 22" fill="#7c7c7c">{p}</svg></div>
          ))}
        </div>
        <div className="flex flex-col">
          <div className="flex">
            {tl.map((t, i) => {
              const red = t === "r" || t === "rl";
              const bg = red ? "bg-[#e9959b]" : t === "eo" ? "bg-[#f6cf9e]" : "";
              return (
                <div key={i} className="w-[29.94px] flex flex-col items-center">
                  <div className={"h-[29px] w-full flex items-center justify-center " + bg}>
                    {t === "m" ? (
                      <FaArrowsAlt size={18} className="text-[#333]" />
                    ) : (
                      <svg width="24" height="24" viewBox="0 0 28 28" className={t === "x" ? "opacity-20" : ""}>
                        {t === "s" ? tIcons.s : t === "e" || t === "eo" || t === "x" ? tIcons.e : t === "rl" ? tIcons.l : t === "j" ? tIcons.j : t === "a" ? tIcons.a : tIcons.f}
                      </svg>
                    )}
                  </div>
                  <div className="w-px h-[7px] bg-[#bdbdbd]" />
                </div>
              );
            })}
          </div>
          <div className="ml-[15px] w-[1655px] h-[2px] bg-[#c4c4c4]" />
        </div>
        <FaCog size={22} className="ml-[27px] mt-[10px] text-[#6f6f6f] shrink-0" />
      </div>
      <svg width="16" height="42" viewBox="0 0 16 42" className="absolute left-[1760px] top-[11px]"><path d="M0 0H15V4L10 12V42H6V12L0 4Z" fill="#2c2c2c" /></svg>
    </div>
  );
}

export default function App() {
  return (
    <div className="w-[1920px] h-[1140px] overflow-hidden flex flex-col bg-white [font-family:'Noto_Sans',sans-serif]">
      <TitleBar />
      <TopStrip />
      <Ribbon />
      <div className="relative flex-1 bg-white overflow-hidden">
        <Canvas />
        <Browser />
        <div className="absolute left-[292px] top-[14px] w-[271px] h-[25px] bg-white border border-[#e8e8e8] flex items-center pb-[2px] text-[14px] text-[#444]">
          <div className="w-[118px] h-full border-r border-[#e8e8e8] flex items-center justify-end pr-[3px] tracking-[0.1px]">1219.20 mm</div>
          <div className="pl-[40px] tracking-[0.3px]">20.00 mm</div>
        </div>
        <div className="absolute left-[325px] top-[375px] text-[19px] text-[#111] [font-family:'Liberation_Sans',sans-serif] leading-[24px]">200.00</div>
        <div className="absolute left-[435px] top-[595px] text-[19px] text-[#111] [font-family:'Liberation_Sans',sans-serif] leading-[24px]">400.00</div>
        <ViewCube />
        <Arrange />
        <div className="absolute left-[6px] top-[870px] w-[372px] h-[29px] bg-[#f4f4f4] border-b border-[#e2e2e2] flex items-center pl-[34px] pr-[14px] pt-[2px] text-[13.5px] tracking-[0.8px] text-[#4a4a4a]">
          COMMENTS
          <span className="ml-auto text-[#888] text-[18px] leading-none font-semibold">+</span>
        </div>
        <NavBar />
        <div className="absolute right-[20px] top-[875px] text-[14.5px] font-medium tracking-[0.2px] text-[#333]">Multiple selections | 4</div>
      </div>
      <Timeline />
    </div>
  );
}
